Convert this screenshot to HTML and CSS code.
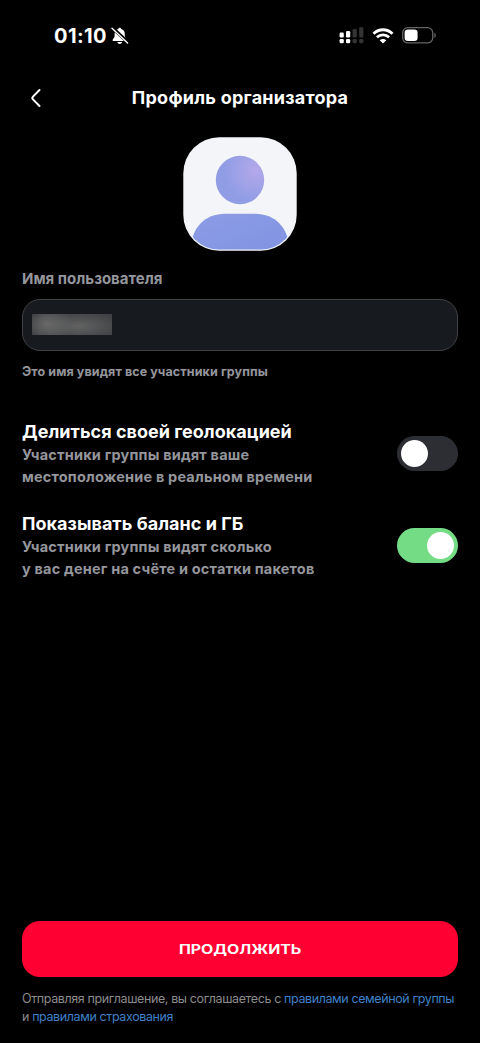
FILE: index.html
```html
<!DOCTYPE html>
<html lang="ru">
<head>
<meta charset="utf-8">
<title>Профиль организатора</title>
<link rel="stylesheet" href="styles.css">
</head>
<body>
<div class="screen">
  <header class="status">
    <div class="status-left">
      <span class="clock">01:10</span>
      <svg class="bell" width="18" height="18" viewBox="0 0 18 18">
        <path d="M8.700 .8c-.8 0-1.300.5-1.400 1.200C4.700 2.600 3.600 4.600 3.600 7v2.300c0 1.500-2 2.600-2 3.900 0 .6.400.9 1 .9h12.300c.6 0 .9-.3.9-.9 0-1.300-2-2.400-2-3.900V7c0-2.400-1.200-4.400-3.700-5C10 1.300 9.500.8 8.700.8zM6.300 15c.3 1.200 1.200 1.900 2.400 1.900s2.100-.7 2.400-1.900z" fill="#fff"/>
        <path d="M1.300 .7 17.300 15.700" stroke="#000" stroke-width="3.400"/>
        <path d="M1 1.200 16.600 16.100" stroke="#fff" stroke-width="1.400" stroke-linecap="round"/>
      </svg>
    </div>
    <div class="status-right">
      <svg width="25" height="17" viewBox="0 0 25 17">
        <g fill="#fff">
          <rect x=".6" y="5.500" width="4.200" height="5" rx="1.200"/><rect x="7" y="4" width="4.200" height="6.500" rx="1.200"/>
          <rect x=".6" y="12" width="4.200" height="4.300" rx="1.300"/><rect x="7" y="12" width="4.200" height="4.300" rx="1.300"/>
        </g>
        <g fill="#343434">
          <rect x="13.600" y="2" width="4.200" height="8.500" rx="1.200"/><rect x="20.200" y=".2" width="4.200" height="10.300" rx="1.200"/>
          <rect x="13.600" y="12" width="4.200" height="4.300" rx="1.300"/><rect x="20.200" y="12" width="4.200" height="4.300" rx="1.300"/>
        </g>
      </svg>
      <svg class="wifi" width="22" height="16" viewBox="0 0 22 16">
        <path d="M1.500 5.700C6.900.4 15.100.4 20.500 5.700M4.900 9.300c3.500-3.300 8.700-3.300 12.200 0" fill="none" stroke="#fff" stroke-width="2.800"/>
        <path d="M11 15.500 7.700 12.200c1.900-1.700 4.700-1.700 6.600 0z" fill="#fff"/>
      </svg>
      <svg class="battery" width="35" height="17" viewBox="0 0 35 17">
        <rect x=".7" y=".7" width="30" height="15.200" rx="5" fill="none" stroke="#656565" stroke-width="1.300"/>
        <rect x="2.600" y="2.600" width="13" height="11.400" rx="3.300" fill="#fff"/>
        <path d="M32.300 5.700c2 .8 2 4.400 0 5.200z" fill="#656565"/>
      </svg>
    </div>
  </header>

  <nav class="nav">
    <svg class="back" width="12" height="20" viewBox="0 0 12 20"><path d="M9.500 2 3 8.600q-1.300 1.400 0 2.800L9.500 18" fill="none" stroke="#fff" stroke-width="2" stroke-linecap="round"/></svg>
    <h1 class="nav-title">Профиль организатора</h1>
  </nav>

  <main class="content">
    <svg class="avatar" width="114" height="114" viewBox="0 0 114 114">
      <defs>
        <radialGradient id="head" cx=".82" cy=".3" r=".65"><stop offset="0" stop-color="#b4a8ea"/><stop offset="1" stop-color="#909de5"/></radialGradient>
        <linearGradient id="body" x1="0" y1="0" x2="1" y2="1"><stop offset="0" stop-color="#8d9ce5"/><stop offset="1" stop-color="#8093e2"/></linearGradient>
        <clipPath id="frame"><rect x="1.400" y="1.400" width="111.200" height="111.200" rx="35"/></clipPath>
      </defs>
      <rect x=".3" y=".3" width="113.400" height="113.400" rx="36" fill="#f3f5f9"/>
      <circle cx="57" cy="43" r="24.200" fill="url(#head)"/>
      <path clip-path="url(#frame)" d="M8 112c0-21 14-35.200 34-35.200h30c20 0 34 14.200 34 35.200v1H8z" fill="url(#body)"/>
    </svg>

    <div class="label">Имя пользователя</div>
    <div class="input"><span class="masked"></span></div>
    <div class="hint">Это имя увидят все участники группы</div>

    <section class="option">
      <div>
        <h2 class="option-title">Делиться своей геолокацией</h2>
        <p class="option-text">Участники группы видят ваше<br>местоположение в реальном времени</p>
      </div>
      <span class="toggle"><span class="knob"></span></span>
    </section>
    <section class="option">
      <div>
        <h2 class="option-title">Показывать баланс и ГБ</h2>
        <p class="option-text">Участники группы видят сколько<br>у вас денег на счёте и остатки пакетов</p>
      </div>
      <span class="toggle on"><span class="knob"></span></span>
    </section>
  </main>

  <footer class="footer">
    <div class="button"><span class="button-text">ПРОДОЛЖИТЬ</span></div>
    <p class="legal">Отправляя приглашение, вы соглашаетесь с <a class="link">правилами семейной группы</a><br>и <a class="link">правилами страхования</a></p>
  </footer>
</div>
</body>
</html>
```
FILE: styles.css
```css
* { box-sizing: border-box; }
body, h1, h2, p { margin: 0; }
body { background: #000; }
.screen {
  width: 480px; height: 1043px; overflow: hidden;
  display: flex; flex-direction: column;
  background: #000; color: #fff;
  font-family: Inter, "Liberation Sans", sans-serif;
  font-weight: 700; white-space: nowrap;
}
.status { height: 70px; padding: 1px 43.5px 0 54px; display: flex; align-items: center; justify-content: space-between; }
.status-left, .status-right { display: flex; align-items: center; }
.clock { font-size: 20px; line-height: 24px; letter-spacing: 0.4px; }
.bell { margin-left: 4px; }
.wifi { margin-left: 7.5px; }
.battery { margin-left: 8px; }
.nav { height: 56px; display: grid; grid-template-columns: 66px 1fr 66px; align-items: center; }
.back { margin-left: 30px; }
.nav-title { text-align: center; font-size: 18px; line-height: 24px; letter-spacing: 0.23px; }
.content { padding: 11px 22px 0; display: flex; flex-direction: column; }
.avatar { align-self: center; }
.label { margin-top: 18px; font-size: 15px; line-height: 20px; color: #94969c; }
.input {
  height: 52px; margin-top: 10px; padding-left: 9px;
  display: flex; align-items: center;
  background: #171a1e; border: 1px solid #414244; border-radius: 18px;
}
.masked {
  width: 80px; height: 21px; margin-bottom: 2px;
  background: radial-gradient(ellipse 24px 18px at 16px 10px, #686868, transparent), radial-gradient(ellipse 60px 19px at 46px 12px, #626262, #33363a);
}
.hint { margin: 11px 0 37px; font-size: 12.5px; line-height: 20px; letter-spacing: 0.1px; color: #94969c; }
.option { height: 68px; margin-bottom: 24px; display: flex; align-items: center; justify-content: space-between; }
.option-title { padding-top: 1px; font-size: 18px; line-height: 23px; letter-spacing: 0.03px; }
.option-text { padding-top: 1px; font-size: 14.5px; line-height: 22px; letter-spacing: 0.19px; color: #94969c; }
.option > div { height: 68px; }
.toggle { width: 61px; height: 35px; padding: 4px; border-radius: 18px; background: #2c2e34; display: flex; align-items: center; }
.toggle.on { background: #74dc85; justify-content: flex-end; }
.knob { width: 27px; height: 27px; border-radius: 50%; background: #fff; }
.footer { margin-top: auto; padding: 0 22px 17px; }
.button { height: 56px; border-radius: 18px; background: #ff0032; display: flex; align-items: center; justify-content: center; }
.button-text { font-size: 13px; line-height: 20px; transform: scaleX(1.22); }
.legal { margin-top: 13px; font-size: 12.5px; font-weight: 400; line-height: 18px; letter-spacing: -0.39px; color: #8c8c8c; }
.link { color: #3f80c8; }
```
